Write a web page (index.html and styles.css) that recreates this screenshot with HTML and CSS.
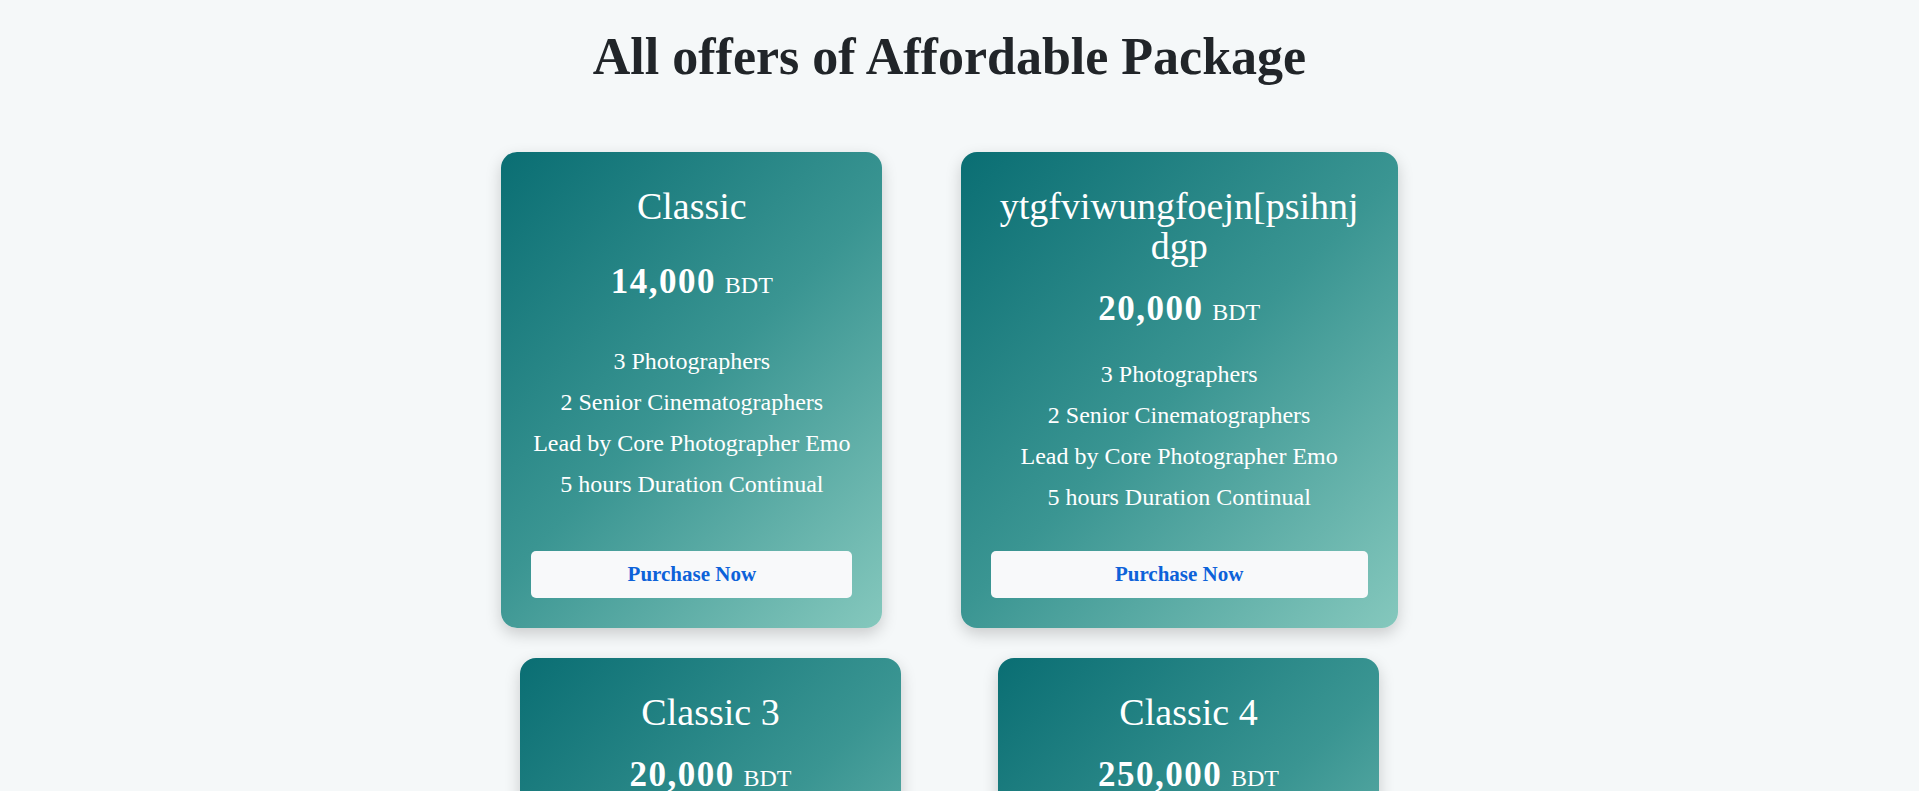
FILE: index.html
```html
<!DOCTYPE html>
<html lang="en">
<head>
<meta charset="utf-8">
<title>All offers of Affordable Package</title>
<link rel="stylesheet" href="styles.css">
</head>
<body>
<main class="page">
  <h1 class="page-title">All offers of Affordable Package</h1>
  <section class="offers">
    <article class="card">
      <h2 class="card-title">Classic</h2>
      <p class="price"><span class="amount">14,000</span> <span class="currency">BDT</span></p>
      <ul class="features">
        <li>3 Photographers</li>
        <li>2 Senior Cinematographers</li>
        <li>Lead by Core Photographer Emo</li>
        <li>5 hours Duration Continual</li>
      </ul>
      <button class="buy">Purchase Now</button>
    </article>
    <article class="card card--wide">
      <h2 class="card-title">ytgfviwungfoejn[psihnj dgp</h2>
      <p class="price"><span class="amount">20,000</span> <span class="currency">BDT</span></p>
      <ul class="features">
        <li>3 Photographers</li>
        <li>2 Senior Cinematographers</li>
        <li>Lead by Core Photographer Emo</li>
        <li>5 hours Duration Continual</li>
      </ul>
      <button class="buy">Purchase Now</button>
    </article>
    <article class="card">
      <h2 class="card-title">Classic 3</h2>
      <p class="price"><span class="amount">20,000</span> <span class="currency">BDT</span></p>
      <ul class="features">
        <li>3 Photographers</li>
        <li>2 Senior Cinematographers</li>
        <li>Lead by Core Photographer Emo</li>
        <li>5 hours Duration Continual</li>
      </ul>
      <button class="buy">Purchase Now</button>
    </article>
    <article class="card">
      <h2 class="card-title">Classic 4</h2>
      <p class="price"><span class="amount">250,000</span> <span class="currency">BDT</span></p>
      <ul class="features">
        <li>3 Photographers</li>
        <li>2 Senior Cinematographers</li>
        <li>Lead by Core Photographer Emo</li>
        <li>5 hours Duration Continual</li>
      </ul>
      <button class="buy">Purchase Now</button>
    </article>
    <article class="card">
      <h2 class="card-title">Classic 5</h2>
      <p class="price"><span class="amount">30,000</span> <span class="currency">BDT</span></p>
      <ul class="features">
        <li>3 Photographers</li>
        <li>2 Senior Cinematographers</li>
        <li>Lead by Core Photographer Emo</li>
        <li>5 hours Duration Continual</li>
      </ul>
      <button class="buy">Purchase Now</button>
    </article>
    <article class="card">
      <h2 class="card-title">Classic 6</h2>
      <p class="price"><span class="amount">35,000</span> <span class="currency">BDT</span></p>
      <ul class="features">
        <li>3 Photographers</li>
        <li>2 Senior Cinematographers</li>
        <li>Lead by Core Photographer Emo</li>
        <li>5 hours Duration Continual</li>
      </ul>
      <button class="buy">Purchase Now</button>
    </article>
    <article class="card">
      <h2 class="card-title">Classic 7</h2>
      <p class="price"><span class="amount">40,000</span> <span class="currency">BDT</span></p>
      <ul class="features">
        <li>3 Photographers</li>
        <li>2 Senior Cinematographers</li>
        <li>Lead by Core Photographer Emo</li>
        <li>5 hours Duration Continual</li>
      </ul>
      <button class="buy">Purchase Now</button>
    </article>
    <article class="card">
      <h2 class="card-title">Classic 8</h2>
      <p class="price"><span class="amount">45,000</span> <span class="currency">BDT</span></p>
      <ul class="features">
        <li>3 Photographers</li>
        <li>2 Senior Cinematographers</li>
        <li>Lead by Core Photographer Emo</li>
        <li>5 hours Duration Continual</li>
      </ul>
      <button class="buy">Purchase Now</button>
    </article>
    <article class="card">
      <h2 class="card-title">Classic 9</h2>
      <p class="price"><span class="amount">50,000</span> <span class="currency">BDT</span></p>
      <ul class="features">
        <li>3 Photographers</li>
        <li>2 Senior Cinematographers</li>
        <li>Lead by Core Photographer Emo</li>
        <li>5 hours Duration Continual</li>
      </ul>
      <button class="buy">Purchase Now</button>
    </article>
    <article class="card">
      <h2 class="card-title">Classic 10</h2>
      <p class="price"><span class="amount">55,000</span> <span class="currency">BDT</span></p>
      <ul class="features">
        <li>3 Photographers</li>
        <li>2 Senior Cinematographers</li>
        <li>Lead by Core Photographer Emo</li>
        <li>5 hours Duration Continual</li>
      </ul>
      <button class="buy">Purchase Now</button>
    </article>
    <article class="card">
      <h2 class="card-title">Classic 11</h2>
      <p class="price"><span class="amount">60,000</span> <span class="currency">BDT</span></p>
      <ul class="features">
        <li>3 Photographers</li>
        <li>2 Senior Cinematographers</li>
        <li>Lead by Core Photographer Emo</li>
        <li>5 hours Duration Continual</li>
      </ul>
      <button class="buy">Purchase Now</button>
    </article>
    <article class="card">
      <h2 class="card-title">Classic 12</h2>
      <p class="price"><span class="amount">65,000</span> <span class="currency">BDT</span></p>
      <ul class="features">
        <li>3 Photographers</li>
        <li>2 Senior Cinematographers</li>
        <li>Lead by Core Photographer Emo</li>
        <li>5 hours Duration Continual</li>
      </ul>
      <button class="buy">Purchase Now</button>
    </article>
    <article class="card">
      <h2 class="card-title">Classic 13</h2>
      <p class="price"><span class="amount">70,000</span> <span class="currency">BDT</span></p>
      <ul class="features">
        <li>3 Photographers</li>
        <li>2 Senior Cinematographers</li>
        <li>Lead by Core Photographer Emo</li>
        <li>5 hours Duration Continual</li>
      </ul>
      <button class="buy">Purchase Now</button>
    </article>
    <article class="card">
      <h2 class="card-title">Classic 14</h2>
      <p class="price"><span class="amount">75,000</span> <span class="currency">BDT</span></p>
      <ul class="features">
        <li>3 Photographers</li>
        <li>2 Senior Cinematographers</li>
        <li>Lead by Core Photographer Emo</li>
        <li>5 hours Duration Continual</li>
      </ul>
      <button class="buy">Purchase Now</button>
    </article>
    <article class="card">
      <h2 class="card-title">Classic 15</h2>
      <p class="price"><span class="amount">80,000</span> <span class="currency">BDT</span></p>
      <ul class="features">
        <li>3 Photographers</li>
        <li>2 Senior Cinematographers</li>
        <li>Lead by Core Photographer Emo</li>
        <li>5 hours Duration Continual</li>
      </ul>
      <button class="buy">Purchase Now</button>
    </article>
    <article class="card">
      <h2 class="card-title">Classic 16</h2>
      <p class="price"><span class="amount">85,000</span> <span class="currency">BDT</span></p>
      <ul class="features">
        <li>3 Photographers</li>
        <li>2 Senior Cinematographers</li>
        <li>Lead by Core Photographer Emo</li>
        <li>5 hours Duration Continual</li>
      </ul>
      <button class="buy">Purchase Now</button>
    </article>
  </section>
</main>
</body>
</html>
```

FILE: styles.css
```css
html, body {
  margin: 0;
  padding: 0;
}

body {
  background: #f5f8f9;
  color: #212529;
  font-family: "Liberation Serif", "Times New Roman", serif;
}

.page {
  padding: 26px 20px 40px 0;
}

.page-title {
  margin: 0;
  font-size: 52px;
  line-height: 62px;
  font-weight: 700;
  text-align: center;
  color: #212529;
}

.offers {
  width: 1053px;
  margin: 64px auto 0;
  display: flex;
  flex-wrap: wrap;
  justify-content: space-evenly;
  row-gap: 30px;
}

.card {
  box-sizing: border-box;
  width: 381px;
  display: flex;
  flex-direction: column;
  justify-content: space-between;
  padding: 34px 30px 30px;
  border-radius: 16px;
  background: linear-gradient(135deg, #0a6e73 0%, #3a9592 50%, #85c8bd 100%);
  box-shadow: 0 6px 16px rgba(0, 0, 0, 0.18);
  color: #ffffff;
  text-align: center;
}

.card--wide {
  width: 437px;
}

.card-title {
  margin: 0;
  font-size: 38px;
  line-height: 40px;
  font-weight: 400;
}

.price {
  margin: 23px 0 0;
  font-size: 35px;
  line-height: 40px;
}

.amount {
  font-weight: 700;
  letter-spacing: 1.5px;
}

.currency {
  font-size: 24px;
  line-height: 1;
  font-weight: 400;
}

.features {
  margin: 25px 0 0;
  padding: 0;
  list-style: none;
  font-size: 24px;
  line-height: 41px;
}

.buy {
  margin-top: 33px;
  width: 100%;
  height: 47px;
  border: none;
  border-radius: 5px;
  background: #f8f9fa;
  color: #0d62d9;
  font-family: "Liberation Serif", "Times New Roman", serif;
  font-size: 21px;
  font-weight: 700;
  cursor: pointer;
}
```
